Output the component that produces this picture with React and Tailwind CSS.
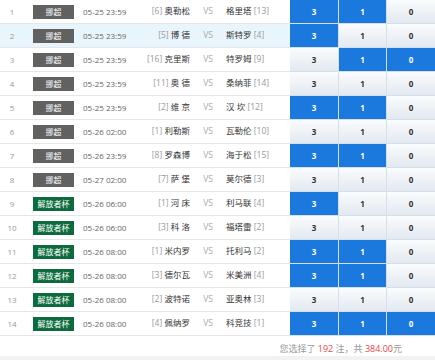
import React from "react";

const rows = [
  ["挪超", "05-25 23:59", "6", "奥勒松", "格里塔", "13", [1, 1, 0]],
  ["挪超", "05-25 23:59", "5", "博 德", "斯特罗", "4", [1, 0, 0]],
  ["挪超", "05-25 23:59", "16", "克里斯", "特罗姆", "9", [0, 1, 1]],
  ["挪超", "05-25 23:59", "11", "奥 德", "桑纳菲", "14", [0, 0, 0]],
  ["挪超", "05-25 23:59", "2", "维 京", "汉 坎", "12", [1, 1, 0]],
  ["挪超", "05-26 02:00", "1", "利勒斯", "瓦勒伦", "10", [0, 0, 0]],
  ["挪超", "05-26 23:59", "8", "罗森博", "海于松", "15", [1, 1, 0]],
  ["挪超", "05-27 02:00", "7", "萨 堡", "莫尔德", "3", [0, 0, 0]],
  ["解放者杯", "05-26 06:00", "1", "河 床", "利马联", "4", [1, 0, 0]],
  ["解放者杯", "05-26 06:00", "3", "科 洛", "福塔雷", "2", [0, 0, 0]],
  ["解放者杯", "05-26 08:00", "1", "米内罗", "托利马", "2", [1, 1, 0]],
  ["解放者杯", "05-26 08:00", "3", "德尔瓦", "米美洲", "4", [1, 1, 0]],
  ["解放者杯", "05-26 08:00", "2", "波特诺", "亚奥林", "3", [0, 0, 0]],
  ["解放者杯", "05-26 08:00", "4", "佩纳罗", "科竞技", "1", [1, 1, 1]],
];

const labels = ["3", "1", "0"];
const widths = ["w-[48px]", "w-[47px]", "w-[48px]"];

function Cell({ sel, label, w }) {
  return (
    <div
      className={
        w +
        " h-[23px] flex items-center justify-center text-[8px] font-bold " +
        (sel
          ? "bg-[#1b78dc] text-white"
          : "bg-gradient-to-b from-[#fafcfd] to-[#e2e9f0] text-[#333]")
      }
    >
      {label}
    </div>
  );
}

export default function App() {
  return (
    <div
      className="w-[435px] min-h-[360px] bg-[#f2f2f2]"
      style={{ fontFamily: '"Open Sans","Noto Sans CJK SC",sans-serif' }}
    >
      <div className="bg-white">
        {rows.map((r, i) => {
          const [league, date, hr, home, away, ar, sel] = r;
          const green = league === "解放者杯";
          return (
            <div key={i} className="flex h-[24px]">
              <div
                className={
                  "w-[290px] flex items-center border-b border-[#e6e6e6] " +
                  (i === 1 ? "bg-[#e9f5fd]" : "bg-white")
                }
              >
                <div className="w-[24px] text-center text-[8px] text-[#999]">{i + 1}</div>
                <div
                  className={
                    "ml-[9px] w-[41px] h-[14px] flex items-center justify-center text-[8px] text-white leading-none " +
                    (green ? "bg-[#0c6b3e]" : "bg-[#616161]")
                  }
                >
                  {league}
                </div>
                <div className="ml-[9px] w-[60px] text-[8px] text-[#666] whitespace-nowrap">{date}</div>
                <div className="w-[47px] text-right text-[8.5px] whitespace-nowrap">
                  <span className="text-[#999]">[{hr}]</span>{" "}
                  <span className="text-[#333]">{home}</span>
                </div>
                <div className="w-[36px] text-center text-[8.5px] text-[#aaa]">VS</div>
                <div className="text-[8.5px] whitespace-nowrap">
                  <span className="text-[#333]">{away}</span>{" "}
                  <span className="text-[#999]">[{ar}]</span>
                </div>
              </div>
              <div className="flex gap-[1px] bg-[#d5dfea] h-[24px] pb-[1px]">
                {labels.map((l, k) => (
                  <Cell key={k} sel={sel[k]} label={l} w={widths[k]} />
                ))}
              </div>
            </div>
          );
        })}
        <div className="h-[20px] flex items-end justify-end pr-[33px] pb-[1px] text-[9px] text-[#999] whitespace-nowrap">
          <span>
            您选择了 <span className="text-[#e8474a]">192</span> 注，共{" "}
            <span className="text-[#e8474a]">384.00</span>元
          </span>
        </div>
      </div>
    </div>
  );
}
